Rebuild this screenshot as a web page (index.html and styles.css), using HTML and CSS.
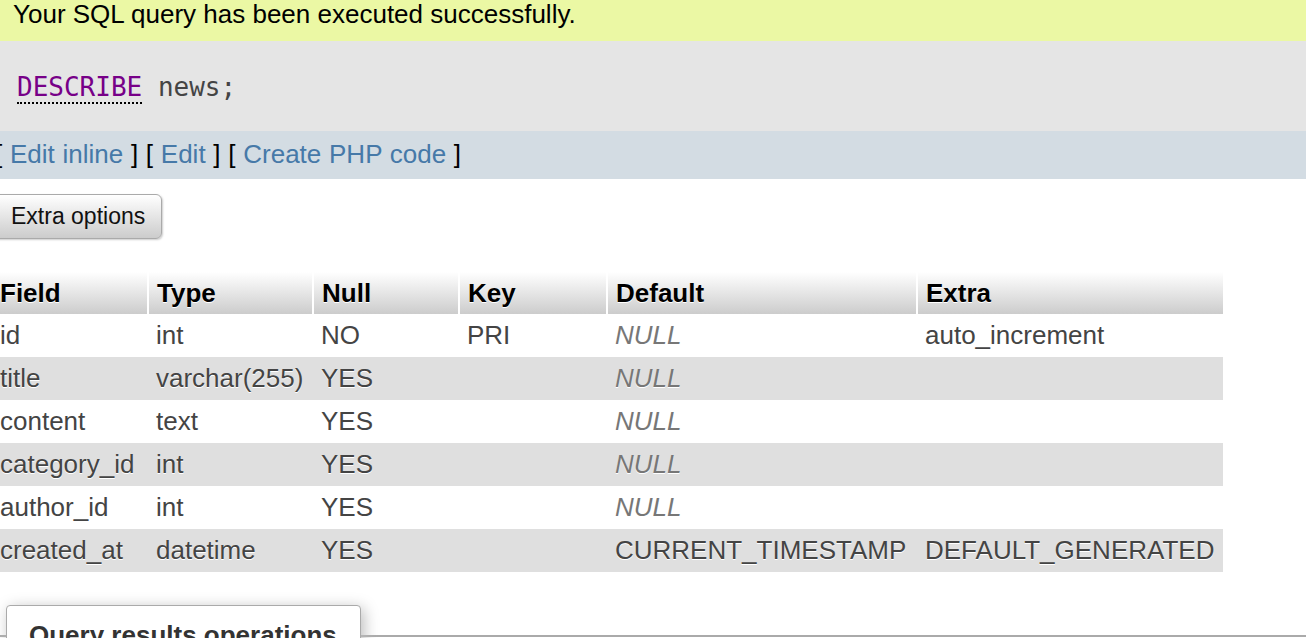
FILE: index.html
```html
<!DOCTYPE html>
<html>
<head>
<meta charset="utf-8">
<link rel="stylesheet" href="styles.css">
</head>
<body>
<div class="page">
  <div class="success">Your SQL query has been executed successfully.</div>
  <div class="sql"><code><span class="kw">DESCRIBE</span> news;</code></div>
  <div class="tools">[ <a href="#">Edit inline</a> ] [ <a href="#">Edit</a> ] [ <a href="#">Create PHP code</a> ]</div>
  <div class="btnrow"><button class="btn">Extra options</button></div>
  <table class="data">
    <thead>
      <tr><th class="c1">Field</th><th class="c2">Type</th><th class="c3">Null</th><th class="c4">Key</th><th class="c5">Default</th><th class="c6">Extra</th></tr>
    </thead>
    <tbody>
      <tr><td>id</td><td>int</td><td>NO</td><td>PRI</td><td class="null">NULL</td><td>auto_increment</td></tr>
      <tr class="even"><td>title</td><td>varchar(255)</td><td>YES</td><td></td><td class="null">NULL</td><td></td></tr>
      <tr><td>content</td><td>text</td><td>YES</td><td></td><td class="null">NULL</td><td></td></tr>
      <tr class="even"><td>category_id</td><td>int</td><td>YES</td><td></td><td class="null">NULL</td><td></td></tr>
      <tr><td>author_id</td><td>int</td><td>YES</td><td></td><td class="null">NULL</td><td></td></tr>
      <tr class="even"><td>created_at</td><td>datetime</td><td>YES</td><td></td><td>CURRENT_TIMESTAMP</td><td>DEFAULT_GENERATED</td></tr>
    </tbody>
  </table>
  <fieldset class="ops"><legend>Query results operations</legend></fieldset>
</div>
</body>
</html>
```

FILE: styles.css
```css
html, body {
  margin: 0;
  padding: 0;
  background: #fff;
  overflow: hidden;
}
body {
  font-family: "Liberation Sans", Arial, Helvetica, sans-serif;
  font-size: 26px;
  color: #000;
}
.page {
  width: 1306px;
  height: 638px;
  overflow: hidden;
}
.success {
  background: #ebf8a4;
  height: 41px;
  box-sizing: border-box;
  padding: 0 0 0 13px;
  line-height: 28px;
  white-space: nowrap;
}
.sql {
  background: #e5e5e5;
  height: 90px;
  box-sizing: border-box;
  padding: 31px 0 0 17px;
}
.sql code {
  font-family: "DejaVu Sans Mono", "Liberation Mono", monospace;
  font-size: 26px;
  color: #444;
}
.kw {
  color: #770088;
  border-bottom: 2px dotted #000;
}
.tools {
  background: #d3dce3;
  height: 48px;
  box-sizing: border-box;
  padding: 8px 0 0 0;
  margin-left: -5px;
  color: #000;
  white-space: nowrap;
  word-spacing: 0.5px;
}
.tools a {
  color: #4679a8;
  text-decoration: none;
}
.btnrow {
  padding: 15px 0 0 0;
  margin-left: -10px;
}
.btn {
  font-family: "Liberation Sans", Arial, Helvetica, sans-serif;
  font-size: 23px;
  color: #111;
  height: 45px;
  padding: 0 16px 0 20px;
  border: 1px solid #aaa;
  border-radius: 6px;
  background: linear-gradient(#ffffff, #cccccc);
  box-shadow: 1px 1px 2px #ccc;
}
.data {
  border-collapse: collapse;
  margin: 33px 0 0 -8px;
  color: #444;
  text-shadow: 0 1px 0 #fff;
}
.data th {
  text-align: left;
  font-weight: bold;
  color: #000;
  height: 42px;
  box-sizing: border-box;
  padding: 0 8px 0 8px;
  background: linear-gradient(#ffffff, #cccccc);
  border-left: 2px solid #fff;
  white-space: nowrap;
}
.data th.c1 { border-left: 0; width: 156px; }
.data th.c2 { width: 165px; }
.data th.c3 { width: 146px; }
.data th.c4 { width: 148px; }
.data th.c5 { width: 310px; }
.data th.c6 { width: 306px; }
.data td {
  height: 43px;
  box-sizing: border-box;
  padding: 0 8px;
  white-space: nowrap;
}
.data tr.even td {
  background: #dfdfdf;
}
.data td.null {
  font-style: italic;
  color: #777;
}
.ops {
  margin: 33px 0 0 0;
  border: 0;
  border-top: 2px solid #aaa;
  padding: 0;
  min-width: 0;
}
.ops legend {
  margin-left: 6px;
  padding: 14px 22px 0 22px;
  height: 62px;
  box-sizing: border-box;
  width: 355px;
  background: #fff;
  border: 1px solid #aaa;
  border-radius: 4px 4px 0 0;
  box-shadow: 3px 3px 15px #bbb;
  font-weight: bold;
  font-size: 26px;
  color: #333;
  white-space: nowrap;
}
```
